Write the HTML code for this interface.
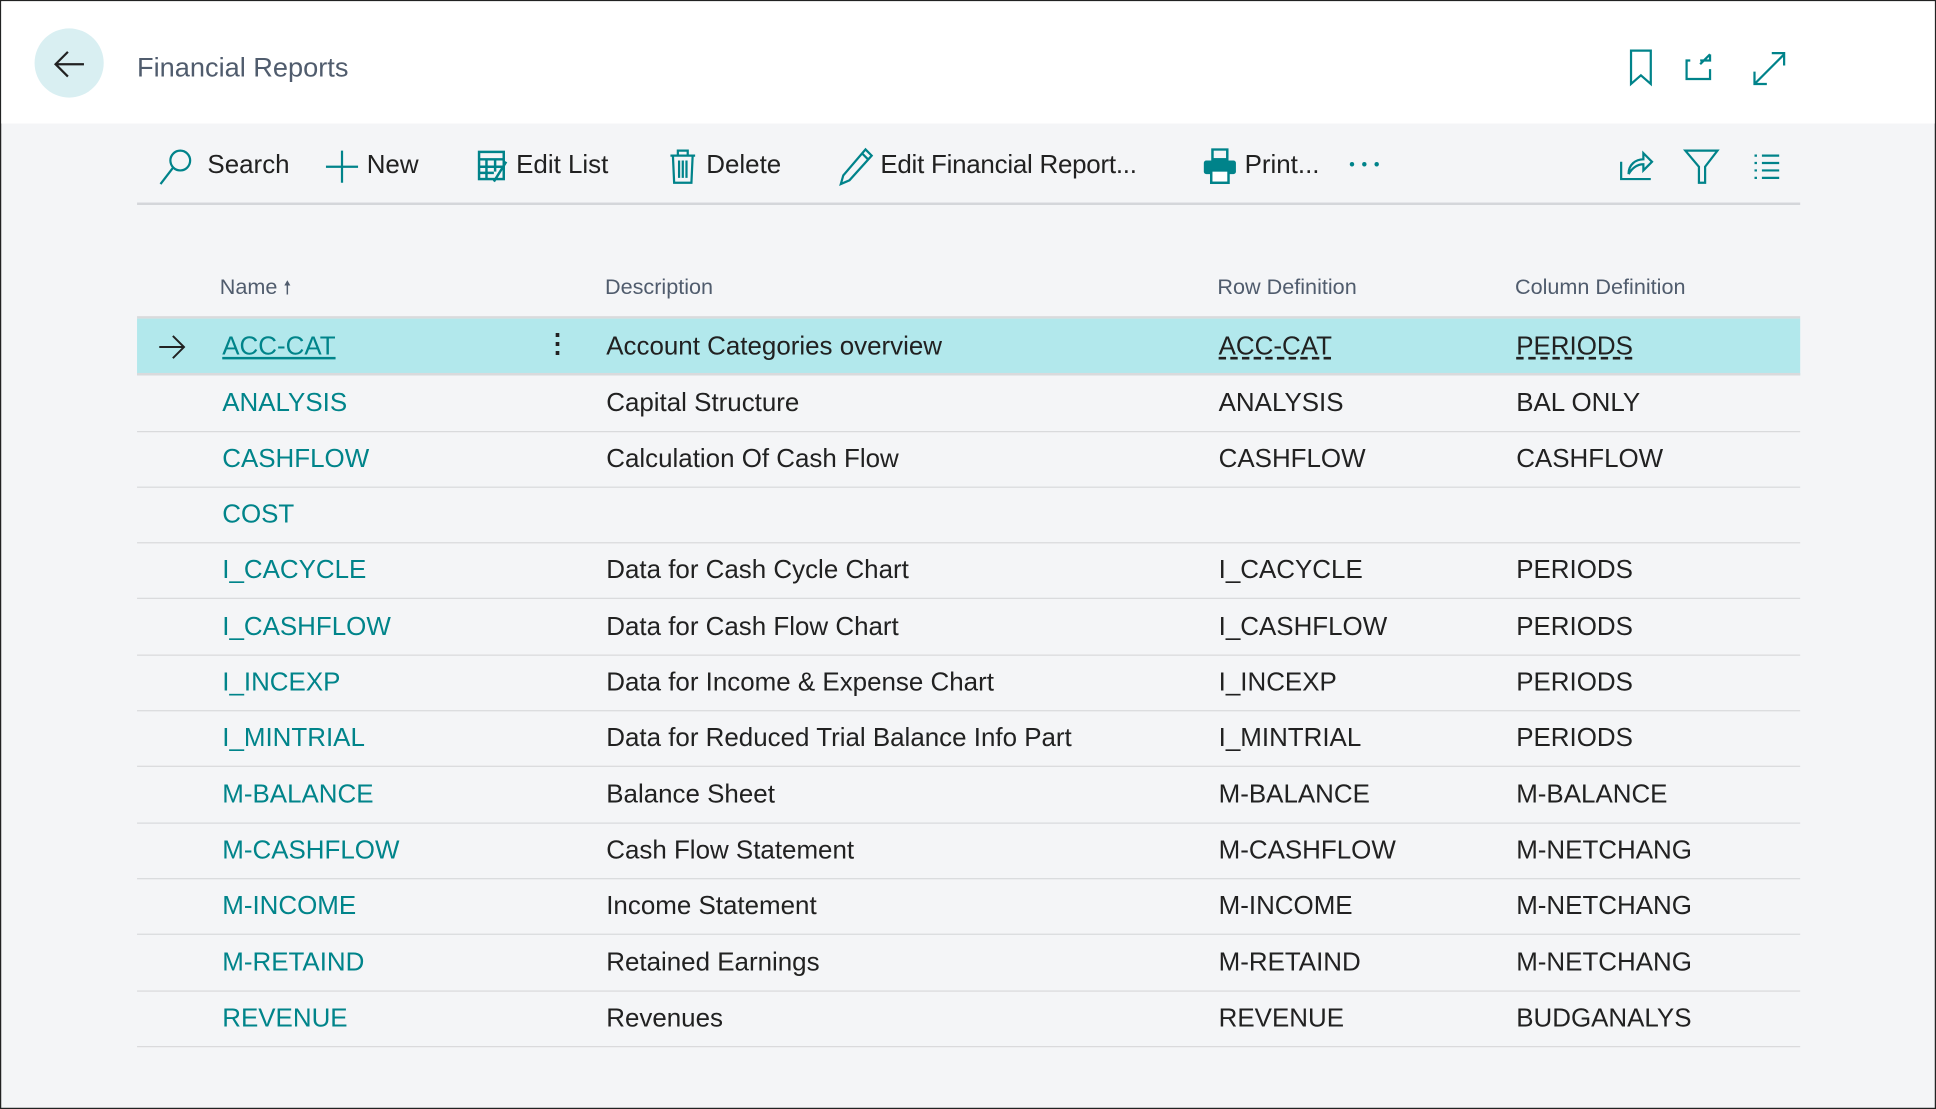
<!DOCTYPE html>
<html><head><meta charset="utf-8"><style>
html,body{margin:0;padding:0;width:1936px;height:1109px;overflow:hidden;background:#fff}
#w{position:absolute;left:0;top:0;width:1568px;height:898px;transform:scale(1.23469,1.23497);transform-origin:0 0;font-family:"Liberation Sans",sans-serif;background:#f4f5f7;box-sizing:border-box;border:1px solid #222;}
.hdr{position:absolute;left:0;top:0;width:1566px;height:99px;background:#fff}
.a{position:absolute;white-space:nowrap}
.tb{font-size:21px;color:#212121;top:121px}
.th{font-size:17.5px;color:#505c6d;top:221px}
.row{position:absolute;left:110px;width:1347px;height:45px;border-bottom:1px solid #d9dadc}
.row span{position:absolute;top:11px;font-size:21px;color:#212121;white-space:nowrap}
.row .n{left:69px;color:#00848a}
.row .d{left:380px}.row .r{left:876px}.row .c{left:1117px}
svg{position:absolute}
</style></head><body><div id="w">
<div class="hdr"></div>
<div class="a" style="left:27px;top:22px;width:56px;height:56px;border-radius:50%;background:#d9eff2"></div>
<svg style="left:40px;top:36px" width="30" height="30" viewBox="0 0 30 30"><path d="M27 15H5M14 5L4 15l10 10" stroke="#222" stroke-width="1.8" fill="none"/></svg>
<div class="a" style="left:110px;top:41px;font-size:22px;color:#505c6d">Financial Reports</div>
<svg style="left:1316px;top:38px" width="130" height="32" viewBox="0 0 130 32" fill="none" stroke="#00838a" stroke-width="1.8"><path d="M4 2h16v27l-8-7-8 7z"/><path d="M52 6h-3v15h19v-8M60 6h8v-5M68 1l-8 8" transform="translate(0,4)"/><path d="M104 29l24-24M104 19v10h10M128 14V4h-10"/></svg>
<svg style="left:126px;top:118px" width="32" height="32" viewBox="0 0 32 32" fill="none" stroke="#00838a" stroke-width="1.8"><circle cx="19" cy="11" r="8"/><path d="M13 17L3 30"/></svg>
<div class="a tb" style="left:167px">Search</div>
<svg style="left:262px;top:120px" width="28" height="28" viewBox="0 0 28 28" stroke="#00838a" stroke-width="1.8"><path d="M14 1v26M1 14h26"/></svg>
<div class="a tb" style="left:296px">New</div>
<svg style="left:385px;top:120px" width="28" height="28" viewBox="0 0 28 28" fill="none" stroke="#00838a" stroke-width="2"><rect x="2" y="2" width="20" height="22"/><path d="M2 8h20M2 14h20M2 19h12M8 8v16M15 8v10M24 10l-10 16"/></svg>
<div class="a tb" style="left:417px">Edit List</div>
<svg style="left:540px;top:119px" width="24" height="30" viewBox="0 0 24 30" fill="none" stroke="#00838a" stroke-width="1.8"><path d="M2 6h20M8 6V2h8v4M4 6l1 22h14l1-22M9 10v14M12 10v14M15 10v14"/></svg>
<div class="a tb" style="left:571px">Delete</div>
<svg style="left:678px;top:118px" width="30" height="32" viewBox="0 0 30 32" fill="none" stroke="#00838a" stroke-width="1.8"><path d="M22 2l5 5L9 27l-7 3 2-7z M19 5l5 5"/></svg>
<div class="a tb" style="left:712px;letter-spacing:-0.2px">Edit Financial Report...</div>
<svg style="left:973px;top:119px" width="30" height="30" viewBox="0 0 30 30" fill="#00838a"><rect x="8" y="1" width="12" height="8" fill="none" stroke="#00838a" stroke-width="2"/><rect x="1" y="10" width="26" height="11" rx="2"/><rect x="7" y="18" width="14" height="10" fill="#fff" stroke="#00838a" stroke-width="2"/></svg>
<div class="a tb" style="left:1007px">Print...</div>
<svg style="left:1090px;top:128px" width="30" height="8" viewBox="0 0 30 8" fill="#00838a"><circle cx="4" cy="4" r="1.8"/><circle cx="14" cy="4" r="1.8"/><circle cx="24" cy="4" r="1.8"/></svg>
<svg style="left:1310px;top:118px" width="140" height="32" viewBox="0 0 140 32" fill="none" stroke="#00838a" stroke-width="1.8"><path d="M2 12v14h24M8 22c0-8 6-12 12-12V5l7 7-7 7v-5c-5 0-9 3-12 8"/><path d="M54 3h26L70 16v13h-5V16z"/><path d="M110 7h2M116 7h14M110 13h2M116 13h14M110 19h2M116 19h14M110 25h2M116 25h14"/></svg>
<div class="a" style="left:110px;top:163px;width:1347px;height:2px;background:#d4d6da"></div>
<div class="a th" style="left:177px">Name <span style="font-size:15px">🠕</span></div>
<div class="a th" style="left:489px">Description</div>
<div class="a th" style="left:985px">Row Definition</div>
<div class="a th" style="left:1226px">Column Definition</div>
<div class="a" style="left:110px;top:255px;width:1347px;height:2px;background:#d9dadc"></div>
<div class="row" style="top:257px;background:#b2e8ec;height:44px;border-bottom:2px solid #d9dadc"><svg style="left:16px;top:12px" width="24" height="22" viewBox="0 0 24 22" fill="none" stroke="#222" stroke-width="1.6"><path d="M2 11h20M13 2l9 9-9 9"/></svg><span class="n" style="text-decoration:underline">ACC-CAT</span><span style="left:330px;top:8px;font-weight:bold">⋮</span><span class="d">Account Categories overview</span><span class="r" style="text-decoration:underline dashed">ACC-CAT</span><span class="c" style="text-decoration:underline dashed">PERIODS</span></div>
<div class="row" style="top:303px"><span class="n">ANALYSIS</span><span class="d">Capital Structure</span><span class="r">ANALYSIS</span><span class="c">BAL ONLY</span></div>
<div class="row" style="top:348px"><span class="n">CASHFLOW</span><span class="d">Calculation Of Cash Flow</span><span class="r">CASHFLOW</span><span class="c">CASHFLOW</span></div>
<div class="row" style="top:393px"><span class="n">COST</span></div>
<div class="row" style="top:438px"><span class="n">I_CACYCLE</span><span class="d">Data for Cash Cycle Chart</span><span class="r">I_CACYCLE</span><span class="c">PERIODS</span></div>
<div class="row" style="top:484px"><span class="n">I_CASHFLOW</span><span class="d">Data for Cash Flow Chart</span><span class="r">I_CASHFLOW</span><span class="c">PERIODS</span></div>
<div class="row" style="top:529px"><span class="n">I_INCEXP</span><span class="d">Data for Income &amp; Expense Chart</span><span class="r">I_INCEXP</span><span class="c">PERIODS</span></div>
<div class="row" style="top:574px"><span class="n">I_MINTRIAL</span><span class="d">Data for Reduced Trial Balance Info Part</span><span class="r">I_MINTRIAL</span><span class="c">PERIODS</span></div>
<div class="row" style="top:620px"><span class="n">M-BALANCE</span><span class="d">Balance Sheet</span><span class="r">M-BALANCE</span><span class="c">M-BALANCE</span></div>
<div class="row" style="top:665px"><span class="n">M-CASHFLOW</span><span class="d">Cash Flow Statement</span><span class="r">M-CASHFLOW</span><span class="c">M-NETCHANG</span></div>
<div class="row" style="top:710px"><span class="n">M-INCOME</span><span class="d">Income Statement</span><span class="r">M-INCOME</span><span class="c">M-NETCHANG</span></div>
<div class="row" style="top:756px"><span class="n">M-RETAIND</span><span class="d">Retained Earnings</span><span class="r">M-RETAIND</span><span class="c">M-NETCHANG</span></div>
<div class="row" style="top:801px"><span class="n">REVENUE</span><span class="d">Revenues</span><span class="r">REVENUE</span><span class="c">BUDGANALYS</span></div>
</div></body></html>
